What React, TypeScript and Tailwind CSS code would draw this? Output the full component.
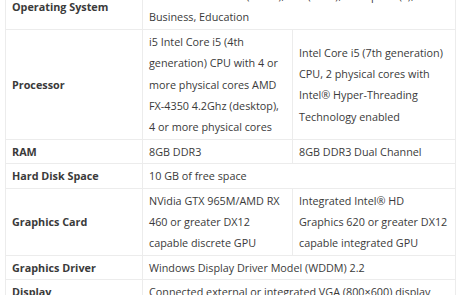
const rows: { label: string; cells: string[] }[] = [
  {
    label: 'Operating System',
    cells: ['Windows 10 Home (64-bit), Pro (1607), Enterprise (S), Business, Education'],
  },
  {
    label: 'Processor',
    cells: [
      'i5 Intel Core i5 (4th generation) CPU with 4 or more physical cores AMD FX-4350 4.2Ghz (desktop), 4 or more physical cores',
      'Intel Core i5 (7th generation) CPU, 2 physical cores with Intel® Hyper-Threading Technology enabled',
    ],
  },
  { label: 'RAM', cells: ['8GB DDR3', '8GB DDR3 Dual Channel'] },
  { label: 'Hard Disk Space', cells: ['10 GB of free space'] },
  {
    label: 'Graphics Card',
    cells: [
      'NVidia GTX 965M/AMD RX 460 or greater DX12 capable discrete GPU',
      'Integrated Intel® HD Graphics 620 or greater DX12 capable integrated GPU',
    ],
  },
  { label: 'Graphics Driver', cells: ['Windows Display Driver Model (WDDM) 2.2'] },
  { label: 'Display', cells: ['Connected external or integrated VGA (800×600) display'] },
];

export default function App() {
  return (
    <div className="w-[460px] h-[295px] overflow-hidden bg-white px-[5px]">
      <table
        className="mt-[-17px] w-[450px] table-fixed border-collapse text-[10.8px] leading-[21.4px] text-[#3a3a3a]"
        style={{ fontFamily: '"Open Sans", sans-serif' }}
      >
        <colgroup>
          <col className="w-[137px]" />
          <col className="w-[150px]" />
          <col className="w-[163px]" />
        </colgroup>
        <tbody>
          {rows.map((row) => (
            <tr key={row.label}>
              <th className="border border-[#ececec] px-[6px] py-[1px] text-left align-middle font-bold">
                {row.label}
              </th>
              {row.cells.map((cell, i) => (
                <td
                  key={i}
                  colSpan={row.cells.length === 1 ? 2 : 1}
                  className="border border-[#ececec] px-[6px] py-[1px] align-middle"
                >
                  {cell}
                </td>
              ))}
            </tr>
          ))}
        </tbody>
      </table>
    </div>
  );
}
